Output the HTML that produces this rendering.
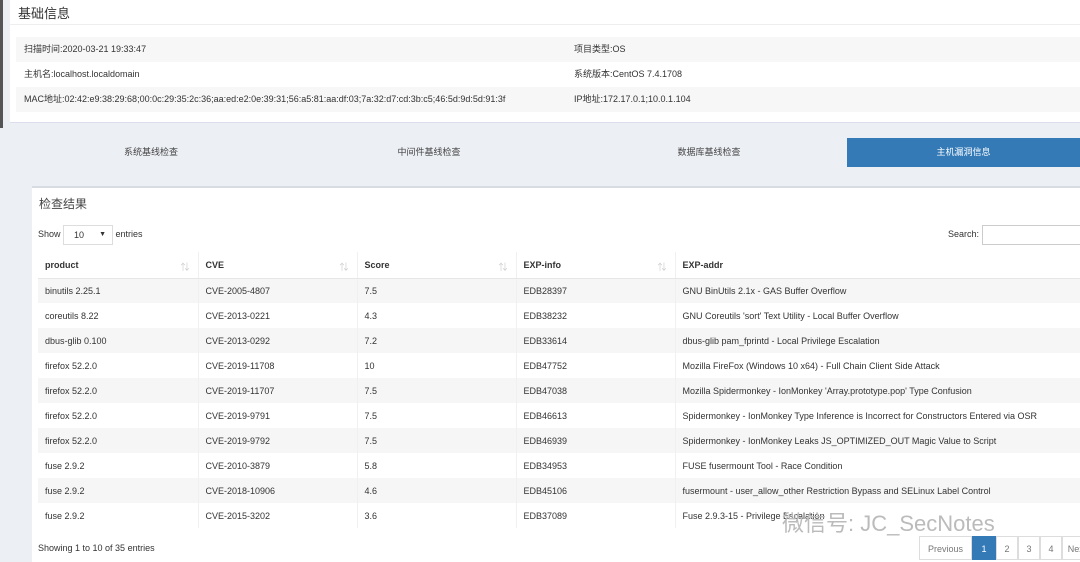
<!DOCTYPE html>
<html><head><meta charset="utf-8"><style>
*{margin:0;padding:0;box-sizing:border-box}
body{width:1080px;height:562px;overflow:hidden;background:#eceff4;font-family:"Liberation Sans","Noto Sans CJK SC",sans-serif;font-size:9px;color:#333;position:relative}
.abs{position:absolute}
.top{left:10px;top:0;width:1070px;height:123px;background:#fff;border-bottom:1px solid #dde}
.row{position:absolute;left:16px;width:1064px;height:25px;line-height:25px;padding-left:8px}
.g{background:#f7f7f7}
.tab{position:absolute;top:138px;height:29px;line-height:29px;text-align:center;font-size:9px;color:#444}
.panel{left:32px;top:186px;width:1048px;height:376px;background:#fff;border-top:2px solid #d8dce2}
table{position:absolute;left:6px;top:64px;width:1060px;border-collapse:collapse}
td,th{height:25px;padding-left:7px;text-align:left;border-right:1px solid #f0f0f0;white-space:nowrap}
th{font-weight:bold;border-bottom:1px solid #e6e6e6;position:relative;height:26px}
th span{position:absolute;right:8px;color:#ccc;font-weight:normal}
tbody tr:nth-child(odd){background:#f6f6f6}
.pg{position:absolute;top:348px;height:24px;line-height:24px;border:1px solid #ddd;text-align:center;color:#777;background:#fff}
</style></head><body>
<div class="abs" style="left:0;top:0;width:3px;height:128px;background:#555"></div>
<div class="abs top">
<div class="abs" style="left:8px;top:3px;font-size:13px;color:#333">基础信息</div>
<div class="abs" style="left:0;top:24px;width:1070px;border-top:1px solid #eee"></div>
</div>
<div class="row g" style="top:37px">扫描时间:2020-03-21 19:33:47<span class="abs" style="left:558px">项目类型:OS</span></div>
<div class="row" style="top:62px">主机名:localhost.localdomain<span class="abs" style="left:558px">系统版本:CentOS 7.4.1708</span></div>
<div class="row g" style="top:87px">MAC地址:02:42:e9:38:29:68;00:0c:29:35:2c:36;aa:ed:e2:0e:39:31;56:a5:81:aa:df:03;7a:32:d7:cd:3b:c5;46:5d:9d:5d:91:3f<span class="abs" style="left:558px">IP地址:172.17.0.1;10.0.1.104</span></div>
<div class="tab" style="left:32px;width:238px">系统基线检查</div>
<div class="tab" style="left:310px;width:238px">中间件基线检查</div>
<div class="tab" style="left:590px;width:238px">数据库基线检查</div>
<div class="tab" style="left:847px;width:233px;background:#337ab7;color:#fff">主机漏洞信息</div>
<div class="abs panel">
<div class="abs" style="left:7px;top:7px;font-size:12px;color:#444">检查结果</div>
<div class="abs" style="left:6px;top:36px;line-height:20px;white-space:nowrap">Show <span style="display:inline-block;width:50px;height:20px;border:1px solid #ddd;padding-left:10px;vertical-align:middle;line-height:18px">10 <span style="float:right;margin-right:6px;font-size:7px">▼</span></span> entries</div>
<div class="abs" style="left:916px;top:36px;line-height:20px;white-space:nowrap;width:200px">Search: <span style="display:inline-block;width:100px;height:20px;border:1px solid #ccc;vertical-align:middle"></span></div>
<table>
<thead><tr><th style="width:160px">product<span>⇅</span></th><th style="width:159px">CVE<span>⇅</span></th><th style="width:159px">Score<span>⇅</span></th><th style="width:159px">EXP-info<span>⇅</span></th><th>EXP-addr</th></tr></thead>
<tbody>
<tr><td>binutils 2.25.1</td><td>CVE-2005-4807</td><td>7.5</td><td>EDB28397</td><td>GNU BinUtils 2.1x - GAS Buffer Overflow</td></tr>
<tr><td>coreutils 8.22</td><td>CVE-2013-0221</td><td>4.3</td><td>EDB38232</td><td>GNU Coreutils 'sort' Text Utility - Local Buffer Overflow</td></tr>
<tr><td>dbus-glib 0.100</td><td>CVE-2013-0292</td><td>7.2</td><td>EDB33614</td><td>dbus-glib pam_fprintd - Local Privilege Escalation</td></tr>
<tr><td>firefox 52.2.0</td><td>CVE-2019-11708</td><td>10</td><td>EDB47752</td><td>Mozilla FireFox (Windows 10 x64) - Full Chain Client Side Attack</td></tr>
<tr><td>firefox 52.2.0</td><td>CVE-2019-11707</td><td>7.5</td><td>EDB47038</td><td>Mozilla Spidermonkey - IonMonkey 'Array.prototype.pop' Type Confusion</td></tr>
<tr><td>firefox 52.2.0</td><td>CVE-2019-9791</td><td>7.5</td><td>EDB46613</td><td>Spidermonkey - IonMonkey Type Inference is Incorrect for Constructors Entered via OSR</td></tr>
<tr><td>firefox 52.2.0</td><td>CVE-2019-9792</td><td>7.5</td><td>EDB46939</td><td>Spidermonkey - IonMonkey Leaks JS_OPTIMIZED_OUT Magic Value to Script</td></tr>
<tr><td>fuse 2.9.2</td><td>CVE-2010-3879</td><td>5.8</td><td>EDB34953</td><td>FUSE fusermount Tool - Race Condition</td></tr>
<tr><td>fuse 2.9.2</td><td>CVE-2018-10906</td><td>4.6</td><td>EDB45106</td><td>fusermount - user_allow_other Restriction Bypass and SELinux Label Control</td></tr>
<tr><td>fuse 2.9.2</td><td>CVE-2015-3202</td><td>3.6</td><td>EDB37089</td><td>Fuse 2.9.3-15 - Privilege Escalation</td></tr>
</tbody></table>
<div class="abs" style="left:6px;top:355px">Showing 1 to 10 of 35 entries</div>
<div class="abs" style="left:750px;top:318px;font-size:22px;color:#bbb">微信号: JC_SecNotes</div>
<div class="pg" style="left:887px;width:53px">Previous</div>
<div class="pg" style="left:940px;width:24px;background:#337ab7;color:#fff;border-color:#337ab7">1</div>
<div class="pg" style="left:964px;width:22px">2</div>
<div class="pg" style="left:986px;width:22px">3</div>
<div class="pg" style="left:1008px;width:22px">4</div>
<div class="pg" style="left:1030px;width:30px">Next</div>
</div>
</body></html>
